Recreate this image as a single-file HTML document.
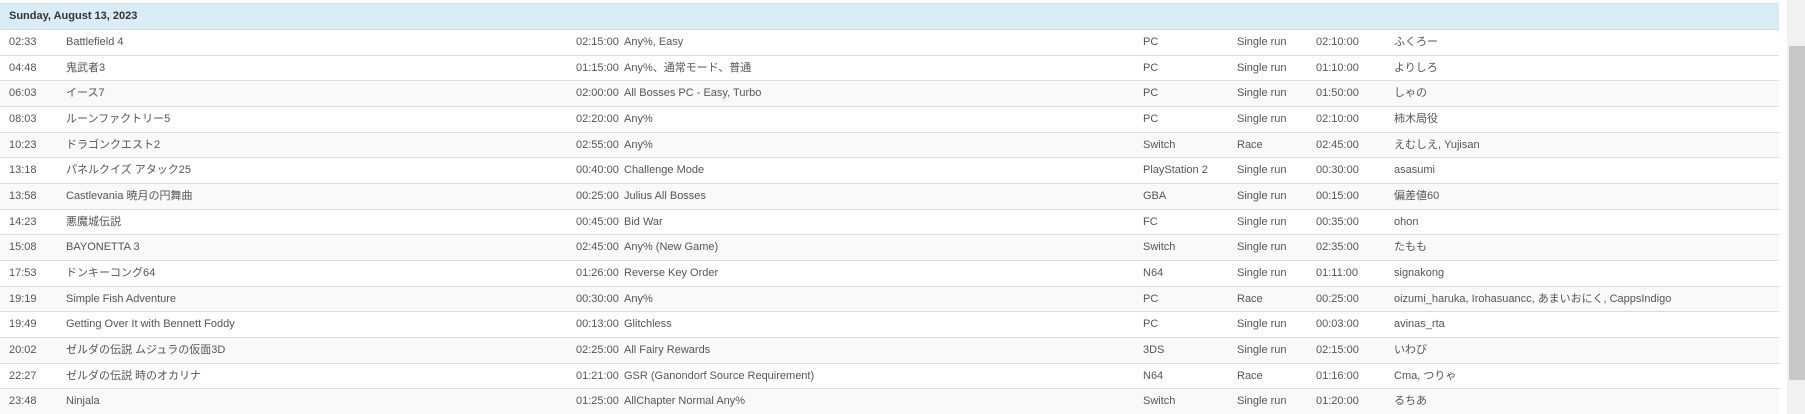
<!DOCTYPE html>
<html><head><meta charset="utf-8"><style>
*{margin:0;padding:0;box-sizing:border-box}
body{width:1805px;height:414px;overflow:hidden;background:#fff;font-family:"Liberation Sans","Noto Sans CJK JP",sans-serif;font-size:11px;color:#555;position:relative}
.hd{position:absolute;left:0;top:3px;width:1779px;height:26px;background:#d9edf7;border-top:1px solid #cfe3ee;font-weight:bold;color:#333;line-height:25px;padding-left:9px}
.r{position:absolute;left:0;width:1779px;height:25.67px;border-top:1px solid #ddd;line-height:24px}
.r:nth-child(even){background:#f9f9f9}
.r span{position:absolute;top:0;white-space:nowrap}
.c1{left:9px}.c2{left:66px}.c3{left:576px}.c4{left:624px}.c5{left:1143px}.c6{left:1237px}.c7{left:1316px}.c8{left:1394px}
.sb{position:absolute;left:1787px;top:0;width:18px;height:414px;background:#f1f1f1}
.th{position:absolute;left:1789px;top:46px;width:16px;height:334px;background:#c8c8c8}
</style></head><body>
<div class="hd">Sunday, August 13, 2023</div>
<div id="rows"></div>
<div class="r" style="top:29px"><span class="c1">02:33</span><span class="c2">Battlefield 4</span><span class="c3">02:15:00</span><span class="c4">Any%, Easy</span><span class="c5">PC</span><span class="c6">Single run</span><span class="c7">02:10:00</span><span class="c8">ふくろー</span></div>
<div class="r" style="top:54.67px;background:#fff"><span class="c1">04:48</span><span class="c2">鬼武者3</span><span class="c3">01:15:00</span><span class="c4">Any%、通常モード、普通</span><span class="c5">PC</span><span class="c6">Single run</span><span class="c7">01:10:00</span><span class="c8">よりしろ</span></div>
<div class="r" style="top:80.33px;background:#f9f9f9"><span class="c1">06:03</span><span class="c2">イース7</span><span class="c3">02:00:00</span><span class="c4">All Bosses PC - Easy, Turbo</span><span class="c5">PC</span><span class="c6">Single run</span><span class="c7">01:50:00</span><span class="c8">しゃの</span></div>
<div class="r" style="top:106px;background:#fff"><span class="c1">08:03</span><span class="c2">ルーンファクトリー5</span><span class="c3">02:20:00</span><span class="c4">Any%</span><span class="c5">PC</span><span class="c6">Single run</span><span class="c7">02:10:00</span><span class="c8">柿木局役</span></div>
<div class="r" style="top:131.67px;background:#f9f9f9"><span class="c1">10:23</span><span class="c2">ドラゴンクエスト2</span><span class="c3">02:55:00</span><span class="c4">Any%</span><span class="c5">Switch</span><span class="c6">Race</span><span class="c7">02:45:00</span><span class="c8">えむしえ, Yujisan</span></div>
<div class="r" style="top:157.33px;background:#fff"><span class="c1">13:18</span><span class="c2">パネルクイズ アタック25</span><span class="c3">00:40:00</span><span class="c4">Challenge Mode</span><span class="c5">PlayStation 2</span><span class="c6">Single run</span><span class="c7">00:30:00</span><span class="c8">asasumi</span></div>
<div class="r" style="top:183px;background:#f9f9f9"><span class="c1">13:58</span><span class="c2">Castlevania 暁月の円舞曲</span><span class="c3">00:25:00</span><span class="c4">Julius All Bosses</span><span class="c5">GBA</span><span class="c6">Single run</span><span class="c7">00:15:00</span><span class="c8">偏差値60</span></div>
<div class="r" style="top:208.67px;background:#fff"><span class="c1">14:23</span><span class="c2">悪魔城伝説</span><span class="c3">00:45:00</span><span class="c4">Bid War</span><span class="c5">FC</span><span class="c6">Single run</span><span class="c7">00:35:00</span><span class="c8">ohon</span></div>
<div class="r" style="top:234.33px;background:#f9f9f9"><span class="c1">15:08</span><span class="c2">BAYONETTA 3</span><span class="c3">02:45:00</span><span class="c4">Any% (New Game)</span><span class="c5">Switch</span><span class="c6">Single run</span><span class="c7">02:35:00</span><span class="c8">たもも</span></div>
<div class="r" style="top:260px;background:#fff"><span class="c1">17:53</span><span class="c2">ドンキーコング64</span><span class="c3">01:26:00</span><span class="c4">Reverse Key Order</span><span class="c5">N64</span><span class="c6">Single run</span><span class="c7">01:11:00</span><span class="c8">signakong</span></div>
<div class="r" style="top:285.67px;background:#f9f9f9"><span class="c1">19:19</span><span class="c2">Simple Fish Adventure</span><span class="c3">00:30:00</span><span class="c4">Any%</span><span class="c5">PC</span><span class="c6">Race</span><span class="c7">00:25:00</span><span class="c8">oizumi_haruka, Irohasuancc, あまいおにく, CappsIndigo</span></div>
<div class="r" style="top:311.33px;background:#fff"><span class="c1">19:49</span><span class="c2">Getting Over It with Bennett Foddy</span><span class="c3">00:13:00</span><span class="c4">Glitchless</span><span class="c5">PC</span><span class="c6">Single run</span><span class="c7">00:03:00</span><span class="c8">avinas_rta</span></div>
<div class="r" style="top:337px;background:#f9f9f9"><span class="c1">20:02</span><span class="c2">ゼルダの伝説 ムジュラの仮面3D</span><span class="c3">02:25:00</span><span class="c4">All Fairy Rewards</span><span class="c5">3DS</span><span class="c6">Single run</span><span class="c7">02:15:00</span><span class="c8">いわび</span></div>
<div class="r" style="top:362.67px;background:#fff"><span class="c1">22:27</span><span class="c2">ゼルダの伝説 時のオカリナ</span><span class="c3">01:21:00</span><span class="c4">GSR (Ganondorf Source Requirement)</span><span class="c5">N64</span><span class="c6">Race</span><span class="c7">01:16:00</span><span class="c8">Cma, つりゃ</span></div>
<div class="r" style="top:388.33px;background:#f9f9f9"><span class="c1">23:48</span><span class="c2">Ninjala</span><span class="c3">01:25:00</span><span class="c4">AllChapter Normal Any%</span><span class="c5">Switch</span><span class="c6">Single run</span><span class="c7">01:20:00</span><span class="c8">るちあ</span></div>
<div class="sb"></div><div class="th"></div>
</body></html>
